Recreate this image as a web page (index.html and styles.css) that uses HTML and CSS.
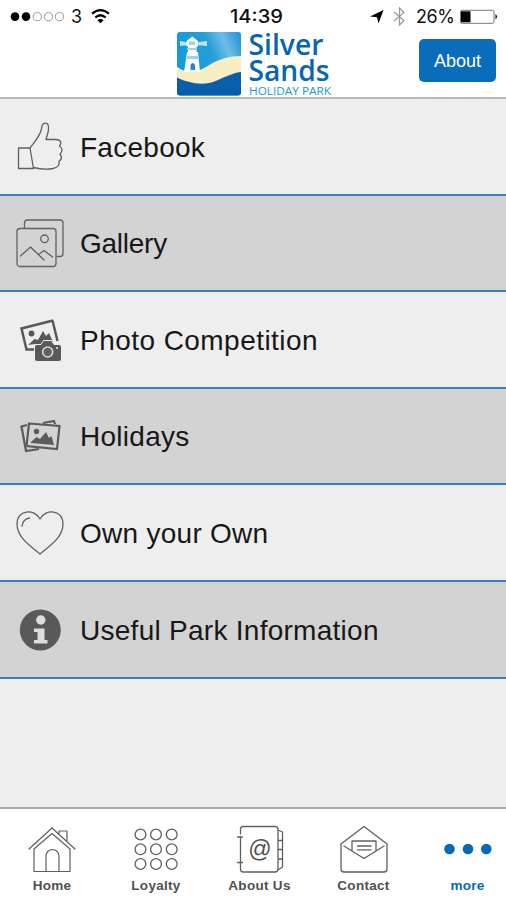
FILE: index.html
```html
<!DOCTYPE html>
<html lang="en">
<head>
<meta charset="utf-8">
<title>Silver Sands Holiday Park</title>
<link rel="stylesheet" href="styles.css">
</head>
<body>
<div class="app">
  <header class="header">
    <div class="status">
      <svg class="signal" viewBox="0 0 115 32" width="115" height="32">
        <g stroke="#999" stroke-width="1" fill="none">
          <circle cx="15" cy="16.600" r="4.300" fill="#000" stroke="none"/><circle cx="26" cy="16.600" r="4.300" fill="#000" stroke="none"/>
          <circle cx="37.300" cy="16.700" r="4.100"/><circle cx="48.500" cy="16.700" r="4.100"/><circle cx="59.500" cy="16.700" r="4.100"/>
        </g>
        <text x="71" y="23.300" class="status-text" textLength="11" lengthAdjust="spacingAndGlyphs">3</text>
        <g fill="none" stroke="#000" stroke-width="2.200"><path d="M92 13.600Q100.500 6.500 109 13.600M95.300 17.500Q100.500 13 105.700 17.500"/></g>
        <path d="M97.400 20.300Q100.500 17.800 103.600 20.300L100.500 23.300Z"/>
      </svg>
      <svg class="clock" viewBox="0 0 60 32" width="60" height="32"><text x="4" y="23.300" class="status-text time" textLength="53" lengthAdjust="spacingAndGlyphs">14:39</text></svg>
      <svg class="power" viewBox="366 0 140 32" width="140" height="32">
        <path d="M370 16.500L383.500 10L378.500 23.500L377 17.200Z"/>
        <path d="M394 12L404 20.500L399.500 25V8L404 12.500L394 21" fill="none" stroke="#999" stroke-width="1.200"/>
        <text x="416" y="23.300" class="status-text" textLength="39">26%</text>
        <rect x="460.500" y="10.300" width="33.500" height="13" rx="1.500" fill="#fff" stroke="#777"/>
        <rect x="461" y="11.300" width="9.500" height="11"/>
        <path d="M495.500 14Q498.500 16.700 495.500 19.500Z"/>
      </svg>
    </div>
    <div class="brand-row">
      <svg class="logo" viewBox="176 32 156 65" width="156" height="65">
        <defs>
          <linearGradient id="sky" x1="0" y1="0.400" x2="1" y2="0"><stop offset="0" stop-color="#129bdc"/><stop offset=".5" stop-color="#279ed9"/><stop offset=".72" stop-color="#70bde6"/><stop offset="1" stop-color="#168bd0"/></linearGradient>
          <clipPath id="tile"><rect x="177" y="32" width="64" height="63.500" rx="3"/></clipPath>
        </defs>
        <g clip-path="url(#tile)">
          <path fill="url(#sky)" d="M176 32H242V97H176Z"/>
          <path fill="#075eac" d="M176 72C192 86 213 84 242 70V97H176Z"/>
          <path fill="#f9edc3" d="M176 66C184 73 195 74 206 67C220 58 230 56 242 56V72C230 73 224 78 213 82C200 86 186 82 176 77Z"/>
          <path fill="#bce3f5" d="M180 41L189 42.500V45L180 46ZM196 42.500L207 41V46L196 45Z"/>
          <path fill="#fff" d="M186.500 41L192.300 36.500L198 41V46.500H196.500V52H198L200 72H184L187 52H188V46.500H186.500Z"/>
          <path fill="#9bd2ec" d="M189 41.500H195V45H189ZM187 48H197V50H187ZM186.800 56H198.300V59H186.500Z"/>
          <path fill="#168fce" d="M190.500 70V65Q192.700 61 195 65V70Z"/>
        </g>
        <text class="logo-name" x="248.500" y="55" textLength="75" lengthAdjust="spacingAndGlyphs">Silver</text>
        <text class="logo-name" x="248.500" y="80.700" textLength="81" lengthAdjust="spacingAndGlyphs">Sands</text>
        <text class="logo-sub" x="249" y="95.200" textLength="82" lengthAdjust="spacingAndGlyphs">HOLIDAY PARK</text>
      </svg>
      <button class="about">About</button>
    </div>
  </header>

  <main class="list">
    <div class="row">
      <svg class="row-icon" viewBox="0 0 48 52"><g class="line"><path d="M2.500 27H14L17.500 47.500H2.500ZM14 27C20 19 24 15 25.500 8C26 0 32 1 32.500 6C33 11 31 14 30 18.500H40C45 18.500 46 22 43.500 25C47 27 46.500 31 44 33C46.500 36 45.500 39 43 40C44 44 41 46.500 37 47.500Q28 49 17.500 46.500"/></g></svg>
      <span class="label">Facebook</span>
    </div>
    <div class="row alt">
      <svg class="row-icon" viewBox="0 0 48 52"><g class="line"><path d="M8.500 11V6Q8.500 3 11.500 3H44Q47 3 47 6V36.500Q47 39.500 44 39.500H41"/><rect x="1" y="11.500" width="39" height="38" rx="3"/><circle cx="28.500" cy="21.800" r="3.800"/><path d="M4.500 39L14.500 30L28 43M22.500 37.500L28 33.500L36.500 40"/></g></svg>
      <span class="label tight">Gallery</span>
    </div>
    <div class="row">
      <svg class="row-icon" viewBox="0 -2 48 52"><path d="M36.500 4.500L41.500 25M37 4.500L5.500 12.500L10.500 33.500H18" fill="none" stroke="#595959" stroke-width="2.500"/><circle cx="15.500" cy="17.500" r="2.900" fill="#595959"/><path d="M12 29L18.500 23L22 24L27 15L30 20L33 17L37 26L29 25L25 29L19 28Z" fill="#595959"/><path d="M18.500 31Q18.500 28.500 21 28.500H25L27.500 24.500H35.500L38 28.500H43Q45.500 28.500 45.500 31V43Q45.500 45.500 43 45.500H21Q18.500 45.500 18.500 43Z" fill="#595959" stroke="#eee"/><circle cx="31.700" cy="36" r="5" fill="#595959" stroke="#ddd" stroke-width="1.600"/><circle cx="31.700" cy="36" r="2.500" fill="none" stroke="#777"/><circle cx="41" cy="32" r="1" fill="#eee"/></svg>
      <span class="label wide">Photo Competition</span>
    </div>
    <div class="row alt">
      <svg class="row-icon" viewBox="0 -2 48 52"><g fill="none" stroke="#5b5b5b" stroke-width="2.200"><path d="M11 13L5.500 14.500L10 39L23 37M27 11L38 9L39 12"/><path d="M13 11.500L43.500 14L41 37L10.500 34Z"/></g><circle cx="20.500" cy="19.500" r="2.700" fill="#5b5b5b"/><path d="M15 30L20.500 25L24 27L30 20L33 26L35.500 24L38 33L15 31Z" fill="#5b5b5b"/></svg>
      <span class="label">Holidays</span>
    </div>
    <div class="row">
      <svg class="row-icon" viewBox="0 0 48 52"><g class="line"><path d="M24 47C13 38 1 30 1 17C1 3 18 1 24 12C30 1 47 3 47 17C47 30 35 38 24 47ZM6 19Q7 12 13.500 11"/></g></svg>
      <span class="label">Own your Own</span>
    </div>
    <div class="row alt">
      <svg class="row-icon" viewBox="0 0 48 52"><circle cx="24.300" cy="26" r="20.500" fill="#595959"/><circle cx="24.800" cy="16" r="4.700" fill="#ddd"/><path d="M18 24.500H28.500V36H31.500V39.500H18V36H21.500V28H18Z" fill="#ddd"/></svg>
      <span class="label">Useful Park Information</span>
    </div>
  </main>

  <nav class="tabs">
    <a class="tab"><svg viewBox="0 0 48 52"><g class="line thin"><path d="M1 24L24 3L47 24M6 24V46.500H42V24L24 8.500ZM18 46.500V31C18 22.500 31 22.500 31 31V46.500M31 9V6H39V17"/></g></svg><span>Home</span></a>
    <a class="tab"><svg viewBox="0 0 48 52"><g class="line"><circle cx="8.500" cy="9.500" r="5.400"/><circle cx="24" cy="9.500" r="5.400"/><circle cx="39.700" cy="9.500" r="5.400"/><circle cx="8.500" cy="24.300" r="5.400"/><circle cx="24" cy="24.300" r="5.400"/><circle cx="39.700" cy="24.300" r="5.400"/><circle cx="8.500" cy="39" r="5.400"/><circle cx="24" cy="39" r="5.400"/><circle cx="39.700" cy="39" r="5.400"/></g></svg><span>Loyalty</span></a>
    <a class="tab"><svg viewBox="0 0 48 52"><g class="line"><path d="M4.500 9V4Q4.500 1.500 7 1.500H39Q42 1.500 42 4.500V44Q42 47 39 47H7Q4.500 47 4.500 44V38M1.500 12H6.500M4.500 12V37.500M1.500 37.500H6.500M42 5L46.500 7V42L42 45M42 15.500H46.500M42 24.500H46.500M42 34H46.500"/></g><text class="at" x="24" y="31.500">@</text></svg><span>About Us</span></a>
    <a class="tab"><svg viewBox="0 0 48 52"><g class="line"><path d="M1 19V44Q1 47 4 47H44Q47 47 47 44V19L24 1.500ZM4 21L24 33.500L44 21M12 26V16H36V26M17.500 21H31M17.500 24.800H31"/></g></svg><span>Contact</span></a>
    <a class="tab active"><svg viewBox="0 0 48 52"><g fill="#0869b8"><circle cx="5.500" cy="24" r="5.300"/><circle cx="24" cy="24" r="5.300"/><circle cx="42.300" cy="24" r="5.300"/></g></svg><span>more</span></a>
  </nav>
</div>
</body>
</html>
```
FILE: styles.css
```css
* { box-sizing: border-box; }
body { margin: 0; font-family: "Liberation Sans", Arial, sans-serif; }
.app { width: 506px; height: 900px; display: flex; flex-direction: column; background: #eee; overflow: hidden; }
.header { height: 99px; background: #fff; border-bottom: 2px solid #b8b8b8; }
.status { height: 32px; display: grid; grid-template-columns: 115px 1fr 140px; }
.clock { margin-left: 111px; }
.status-text { font: 18px Inter, sans-serif; fill: #111; }
.time { font-weight: 500; }
.brand-row { display: flex; height: 65px; padding-left: 176px; }
.logo { flex: none; overflow: visible; }
.logo-name { font: 600 28.500px "Open Sans", sans-serif; fill: #0965b4; }
.logo-sub { font: 11.500px "Open Sans", sans-serif; fill: #1999d5; }
.about { margin: 7px 0 0 87px; width: 77px; height: 43px; padding: 1px 0 0; border: 0; border-radius: 5px; background: #0a6dbc; color: #fff; font: 18px "Liberation Sans", sans-serif; }
.list { height: 708px; display: grid; grid-template-rows: 97px 96px 97px 96px 97px 97px; }
.row { display: flex; align-items: center; gap: 16px; padding-left: 16px; border-bottom: 2px solid #3c80bb; background: #eee; }
.alt { background: #d3d3d3; }
.row-icon { width: 48px; height: 52px; flex: none; }
.line { fill: none; stroke: #606060; stroke-width: 1.300; stroke-linejoin: round; stroke-linecap: round; }
.thin { stroke-width: 1.200; }
.label { padding-top: 2px; font-size: 28px; line-height: 32px; letter-spacing: .27px; color: #181818; white-space: nowrap; }
.tight { letter-spacing: -.25px; }
.wide { letter-spacing: .45px; }
.tabs { height: 93px; padding: 16px 0 0; background: #fff; border-top: 2px solid #a9a9a9; display: grid; grid-template-columns: 104px 104px 103px 105px 103px; }
.tab { display: flex; flex-direction: column; align-items: center; color: #505050; font-size: 13.500px; line-height: 18px; font-weight: bold; letter-spacing: .3px; }
.tab svg { width: 48px; height: 52px; }
.active { color: #0869b8; }
.at { font: 23px "Liberation Sans", sans-serif; fill: #505050; text-anchor: middle; }
```
